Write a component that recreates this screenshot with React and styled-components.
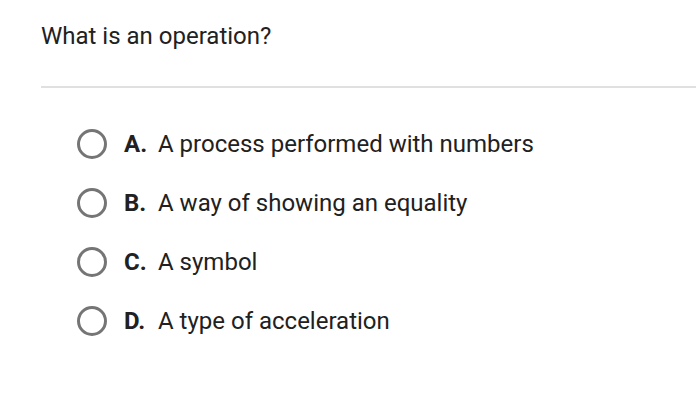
import styled, { createGlobalStyle } from "styled-components"

const GlobalStyle = createGlobalStyle`
    body {
        margin: 0;
        background: #ffffff;
        font-family: Roboto, "Noto Sans", sans-serif;
        color: #212121;
    }
`

const Page = styled.div`
    width: 696px;
    height: 410px;
    overflow: hidden;
`

const Question = styled.div`
    padding: 22px 0 0 41px;
    font-size: 24px;
    line-height: 28px;
    height: 64px;
    box-sizing: border-box;
`

const Divider = styled.div`
    margin-left: 41px;
    margin-top: 22px;
    height: 2px;
    background: #e0e0e0;
`

const Options = styled.div`
    display: flex;
    flex-direction: column;
    gap: 31px;
    padding: 42px 0 0 77px;
`

const Option = styled.div`
    display: flex;
    align-items: center;
    height: 28px;
    font-size: 24px;
`

const Radio = styled.span`
    width: 24px;
    height: 24px;
    border: 3px solid #757575;
    border-radius: 50%;
    flex-shrink: 0;
`

const Letter = styled.span`
    font-weight: 700;
    margin-left: 17px;
    width: 34px;
`

const Answer = styled.span``

const answers = [
    ["A.", "A process performed with numbers"],
    ["B.", "A way of showing an equality"],
    ["C.", "A symbol"],
    ["D.", "A type of acceleration"],
]

function App() {
    return (
        <>
            <GlobalStyle />
            <Page>
                <Question>What is an operation?</Question>
                <Divider />
                <Options>
                    {answers.map(([letter, text]) => (
                        <Option key={letter}>
                            <Radio />
                            <Letter>{letter}</Letter>
                            <Answer>{text}</Answer>
                        </Option>
                    ))}
                </Options>
            </Page>
        </>
    )
}

export default App
